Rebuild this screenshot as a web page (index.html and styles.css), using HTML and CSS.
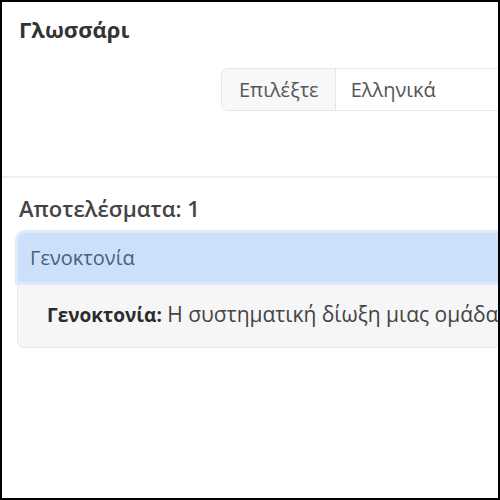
FILE: index.html
```html
<!DOCTYPE html>
<html lang="el">
<head>
<meta charset="utf-8">
<title>Γλωσσάρι</title>
<link rel="stylesheet" href="styles.css">
</head>
<body>
<div class="frame">
  <div class="page">
    <header class="top">
      <h1 class="title">Γλωσσάρι</h1>
      <div class="controls">
        <div class="input-group">
          <span class="addon">Επιλέξτε</span>
          <span class="select">Ελληνικά</span>
        </div>
      </div>
    </header>
    <section class="results">
      <h2 class="count">Αποτελέσματα: 1</h2>
      <div class="accordion">
        <div class="acc-head">Γενοκτονία</div>
        <div class="acc-body"><b>Γενοκτονία:</b> Η συστηματική δίωξη μιας ομάδας ανθρώπων με σκοπό την εξόντωσή της.</div>
      </div>
    </section>
  </div>
</div>
</body>
</html>
```

FILE: styles.css
```css
* { box-sizing: border-box; }
html, body { margin: 0; padding: 0; background: #fff; }
body { font-family: "Open Sans", "Noto Sans", sans-serif; color: #333; }

.frame {
  width: 500px;
  height: 500px;
  border: 2px solid #000;
  overflow: hidden;
  background: #fff;
}
.page { width: 1000px; }

.top {
  padding: 13px 0 0 17px;
  height: 176px;
  border-bottom: 2px solid #efefef;
}
.title {
  margin: 0;
  font-size: 22px;
  font-weight: 700;
  line-height: 28px;
  color: #333;
}
.controls { padding: 25px 0 0 202px; }
.input-group {
  display: flex;
  height: 43px;
  border: 1px solid #e6e6e6;
  border-radius: 7px;
  overflow: hidden;
  width: 700px;
}
.addon {
  display: flex;
  align-items: center;
  padding: 0 16px 0 17px;
  background: #f7f8f9;
  border-right: 1px solid #e6e6e6;
  color: #555;
  font-size: 20px;
}
.select {
  display: flex;
  align-items: center;
  padding: 0 15px;
  color: #555;
  font-size: 20px;
}

.results { padding: 16px 0 0 15px; }
.count {
  margin: 0 0 10px 2px;
  font-size: 22px;
  font-weight: 600;
  line-height: 28px;
  color: #444;
}
.accordion {
  width: 900px;
  border: 1px solid #e8e8e8;
  border-radius: 7px;
  background: #f6f6f6;
}
.acc-head {
  height: 49px;
  display: flex;
  align-items: center;
  padding: 0 12px;
  background: #cde0fb;
  color: #46607f;
  font-size: 20px;
  border-radius: 7px 7px 0 0;
  box-shadow: 0 0 0 3px #dfeafb;
}
.acc-body {
  padding: 18px 29px 18px;
  font-size: 21px;
  line-height: 28px;
  color: #444;
  white-space: nowrap;
}
.acc-body b { color: #2b2b2b; font-weight: 700; font-size: 19px; }
```
